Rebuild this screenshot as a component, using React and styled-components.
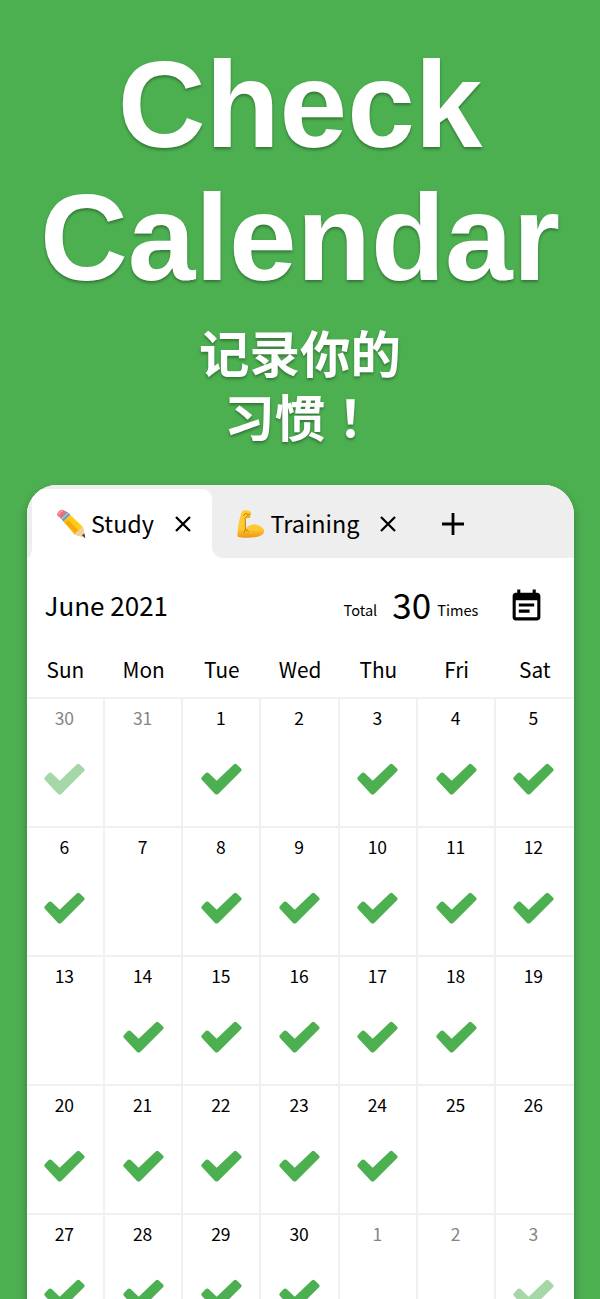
import React from "react";
import styled, { createGlobalStyle } from "styled-components";
import { MdEventNote } from "react-icons/md";

const GlobalStyle = createGlobalStyle`
  * { box-sizing: border-box; }
  body { margin: 0; background: #4caf50; overflow: hidden; }
`;

const Page = styled.main`
  width: 600px;
  height: 1299px;
  overflow: hidden;
  background: #4caf50;
  color: #000;
  font-family: "Noto Sans CJK SC", sans-serif;
  display: flex;
  flex-direction: column;
  align-items: center;
`;

const Hero = styled.header`
  height: 485px;
  padding-top: 39px;
  flex: none;
  text-align: center;
  color: #fff;
  text-shadow: 0 2px 3px rgba(0, 0, 0, 0.33);
`;

const Title = styled.h1`
  margin: 0;
  font: bold 121.5px/132.5px "Liberation Sans", sans-serif;
  white-space: nowrap;
`;

const Tagline = styled.p`
  margin: 15px 0 0;
  font-size: 50.5px;
  font-weight: 700;
  line-height: 64px;
`;

const FullWidthMark = styled.span`
  font-family: "Noto Sans CJK TC", sans-serif;
`;

const Card = styled.section`
  width: 547px;
  height: 900px;
  border-radius: 30px 30px 0 0;
  overflow: hidden;
  background: #fff;
`;

const CardShadow = styled.div`
  flex: none;
  border-radius: 30px 30px 0 0;
  box-shadow: 0 5px 9px rgba(0, 0, 0, 0.3);
`;

const TabBar = styled.nav`
  height: 73px;
  display: flex;
  align-items: flex-end;
  background: #eee;
`;

const TabEdge = styled.div`
  width: 5px;
  height: 69px;
  background: #fff;

  &::before {
    content: "";
    display: block;
    height: 69px;
    background: #eee;
    border-radius: 0 0 5px 0 / 0 0 9px 0;
  }
`;

const TabSlot = styled.div`
  background: ${(p) => (p.$active ? "#eee" : "linear-gradient(#eee 50px, #fff 50px)")};
`;

const TabBody = styled.div`
  width: ${(p) => p.$width}px;
  height: 69px;
  padding: 0 0 0 ${(p) => p.$inset}px;
  display: flex;
  align-items: center;
  background: ${(p) => (p.$active ? "#fff" : "#eee")};
  border-radius: ${(p) => (p.$active ? "10px 10px 0 0" : "0 0 0 11px")};
`;

const TabLabel = styled.span`
  width: ${(p) => p.$width}px;
  margin-left: 4.5px;
  padding-bottom: 1px;
  font-size: 23.4px;
  line-height: 35px;
  white-space: nowrap;
`;

const Glyph = styled.svg`
  display: block;
  flex: none;
`;

const PlusSlot = styled.span`
  margin: 1px 0 0 45.5px;
`;

const Summary = styled.div`
  height: 96px;
  padding: 0 29px 0 18px;
  display: flex;
  align-items: baseline;
  white-space: nowrap;
`;

const Month = styled.div`
  width: 299px;
  font-size: 26px;
  line-height: 94px;
`;

const Small = styled.span`
  font-size: 14.6px;
  line-height: 20px;
`;

const Count = styled.span`
  width: 45px;
  margin-left: 15px;
  font-size: 35px;
  line-height: 40px;
  transform: translateY(3px);
`;

const NoteButton = styled.div`
  align-self: flex-start;
  margin: 30px 0 0 auto;
  height: 37px;
  font-size: 37px;
  line-height: 0;
`;

const Week = styled.div`
  display: grid;
  grid-template-columns: repeat(7, 78.25px);
`;

const Weekday = styled.div`
  height: 43px;
  padding-right: 0.5px;
  text-align: center;
  font-size: 20.8px;
  line-height: 30px;
`;

const Day = styled.div`
  height: 129px;
  display: flex;
  flex-direction: column;
  align-items: center;
  padding-right: ${(p) => (p.$last ? 3 : 0)}px;
  border-top: 2px solid #f0f0f0;
  border-right: ${(p) => (p.$last ? "0" : "2px")} solid #f0f0f0;
`;

const DayNumber = styled.span`
  font-size: 17.5px;
  line-height: 26px;
  margin-top: 6px;
  padding-right: 0.5px;
  color: ${(p) => (p.$muted ? "#858585" : "#000")};
`;

const Check = styled.svg`
  display: block;
  margin: 32px 0 0 0.5px;
  fill: ${(p) => (p.$muted ? "#a5d7a7" : "#4caf50")};
`;

const CheckIcon = ({ muted }) => (
  <Check $muted={muted} width="41" height="32" viewBox="0 0 41 32">
    <path d="M1 17Q-.4 15.4 1 13.9L4.7 10.1Q6.3 8.7 7.9 10.2L15.7 17.8 33 1.3Q34.4.1 35.8 1.4L40 5.4Q41.3 6.8 40 8.3L17.2 30.9Q15.6 32.3 14 30.9Z" />
  </Check>
);

const Pencil = () => (
  <Glyph width="31" height="30" viewBox="0 0 31 30">
    <defs>
      <linearGradient id="wood" x1="0" y1="1" x2="1" y2="0">
        <stop offset="0" stopColor="#e79a05" />
        <stop offset="0.45" stopColor="#fdc610" />
        <stop offset="1" stopColor="#ffda35" />
      </linearGradient>
    </defs>
    <path d="M7 12 13.5 5 27 18 29 28.5 18.5 25.5Z" fill="url(#wood)" />
    <path d="m9 14 3-3 12.5 12.5-2.5 3Z" fill="#f6a90a" />
    <path d="M18.5 25.5c1-1 1.5-1.5 2-3 1 0 2-.5 2.3-2 1.5 0 2.2-1 2.2-2.2 1 .1 1.5 0 2-.3l2 10.5Z" fill="#f1cf9a" />
    <path d="m26 26.3 2.4-1.9.9 4.8Z" fill="#333a3f" />
    <path d="m4.3 9 6.5-6.6 3.5 3.2-6.9 7Z" fill="#6e9cc4" />
    <path d="m5.7 10.2 6.4-6.4" stroke="#b6cede" strokeWidth="1.1" />
    <path d="M1.5 6.8C-.2 4.6 4.2-.5 7.3 1L10.8 3 4.7 9.3Z" fill="#ed7079" />
    <path d="M2.4 5.7C3.5 3.1 5 2 7 1.8" fill="none" stroke="#ff9da3" strokeWidth="1.3" />
  </Glyph>
);

const Muscle = () => (
  <Glyph width="30" height="30" viewBox="0 0 30 30">
    <defs>
      <linearGradient id="skin" x1="0" y1="0" x2="0" y2="1">
        <stop offset="0" stopColor="#ffcc35" />
        <stop offset="0.7" stopColor="#ffc730" />
        <stop offset="1" stopColor="#ee9612" />
      </linearGradient>
    </defs>
    <path
      d="M6 2.2C8.2.8 12 .7 14.5 2.6c.9.9.6 3.6 0 5.2-.5 1.3-1.5 1.7-3.1 1.6-1 .1-1.9-.1-2.2.6l.3 10.2c2.2-3.8 7.2-5.5 11.7-4.2 4 1.1 7.2 3.7 7 6.5-.5 3.7-6.7 6.2-13.2 5.9-4.9.7-9.9.1-12.9-.5-.9-.5-.6-2.4-.5-4C2 16.8 3.1 10.5 6 2.2Z"
      fill="url(#skin)"
    />
    <path d="m9.3 10.2.1 10.5-1.3 2.6M9.6 20.3l2.8 2M7.5 6.2l3-2.1 1.2 1.6 2.1-.7M9 9l2.6-2 1.5 1" fill="none" stroke="#bf790b" strokeWidth="1" strokeLinecap="round" />
  </Glyph>
);

const CloseIcon = () => (
  <Glyph width="16" height="16" viewBox="0 0 16 16" fill="none" stroke="#000" strokeWidth="2.3">
    <path d="m1 1 14 14M15 1 1 15" />
  </Glyph>
);

const PlusIcon = () => (
  <Glyph width="22" height="22" viewBox="0 0 22 22" fill="none" stroke="#000" strokeWidth="2.8">
    <path d="M11 0v22M0 11h22" />
  </Glyph>
);

const weekdays = ["Sun", "Mon", "Tue", "Wed", "Thu", "Fri", "Sat"];
const checked = new Set([0, 2, 4, 5, 6, 7, 9, 10, 11, 12, 13, 15, 16, 17, 18, 19, 21, 22, 23, 24, 25, 28, 29, 30, 31, 34]);
const days = Array.from({ length: 35 }, (_, i) => ({
  number: i < 2 ? i + 30 : i > 31 ? i - 31 : i - 1,
  muted: i < 2 || i > 31,
  checked: checked.has(i),
}));

export default function App() {
  return (
    <Page>
      <GlobalStyle />
      <Hero>
        <Title>Check<br />Calendar</Title>
        <Tagline>记录你的<br />习惯<FullWidthMark lang="zh-TW">！</FullWidthMark></Tagline>
      </Hero>
      <CardShadow>
        <Card>
          <TabBar>
            <TabEdge />
            <TabSlot $active>
              <TabBody $active $width={180} $inset={24}>
                <Pencil />
                <TabLabel $width={83.5}>Study</TabLabel>
                <CloseIcon />
              </TabBody>
            </TabSlot>
            <TabSlot>
              <TabBody $width={335} $inset={24.5}>
                <Muscle />
                <TabLabel $width={109.5}>Training</TabLabel>
                <CloseIcon />
                <PlusSlot><PlusIcon /></PlusSlot>
              </TabBody>
            </TabSlot>
          </TabBar>
          <Summary>
            <Month>June 2021</Month>
            <Small>Total</Small>
            <Count>30</Count>
            <Small>Times</Small>
            <NoteButton><MdEventNote /></NoteButton>
          </Summary>
          <Week>
            {weekdays.map((name) => <Weekday key={name}>{name}</Weekday>)}
          </Week>
          <Week>
            {days.map((day, i) => (
              <Day key={i} $last={i % 7 === 6}>
                <DayNumber $muted={day.muted}>{day.number}</DayNumber>
                {day.checked && <CheckIcon muted={day.muted} />}
              </Day>
            ))}
          </Week>
        </Card>
      </CardShadow>
    </Page>
  );
}
